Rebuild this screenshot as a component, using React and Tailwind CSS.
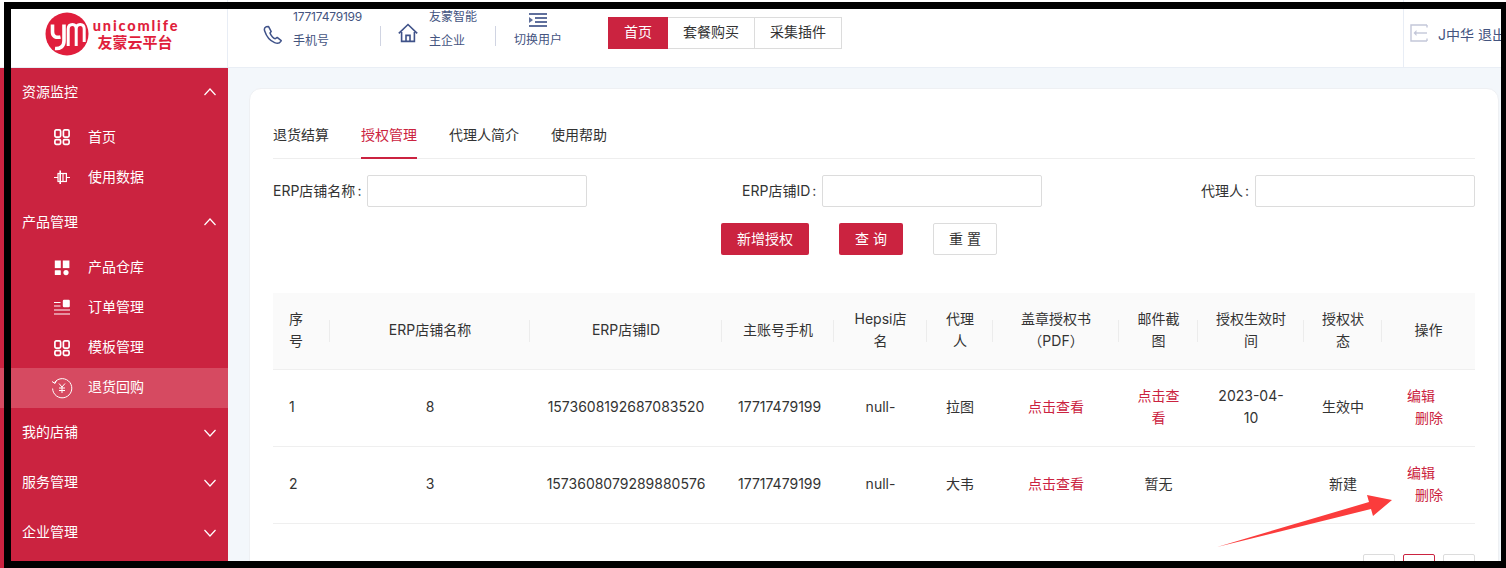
import React from "react";

function Chevron({ up }) {
  return (
    <svg width="14" height="14" viewBox="0 0 14 14" fill="none" stroke="#fff" strokeWidth="1.2">
      <path d={up ? "M1.5 10 L7 4 L12.5 10" : "M1.5 4 L7 10 L12.5 4"} />
    </svg>
  );
}

function GridIcon() {
  return (
    <svg width="18" height="18" viewBox="0 0 18 18" fill="none" stroke="#fff" strokeWidth="1.7">
      <rect x="1.9" y="1.9" width="5.7" height="7.2" rx="1.3" />
      <rect x="10.4" y="1.9" width="5.7" height="7.2" rx="1.3" />
      <rect x="1.9" y="11.7" width="5.7" height="4.6" rx="1.3" />
      <rect x="10.4" y="11.7" width="5.7" height="4.6" rx="1.3" />
    </svg>
  );
}

function DataIcon() {
  return (
    <svg width="18" height="18" viewBox="0 0 18 18" fill="none" stroke="#fff" strokeWidth="1.2">
      <path d="M1 9.5H5M13.5 9.5H17" />
      <path d="M7.2 2.5V16" strokeWidth="1.6" />
      <rect x="5" y="5.5" width="8.4" height="8" />
      <path d="M10 5.5V13.5" />
    </svg>
  );
}

function WarehouseIcon() {
  return (
    <svg width="18" height="18" viewBox="0 0 18 18" fill="#fff">
      <rect x="1.8" y="1.5" width="6" height="7.6" />
      <rect x="9.8" y="1.5" width="6.6" height="7.6" />
      <rect x="1.8" y="11.2" width="6" height="4.8" rx="0.6" />
      <circle cx="13" cy="13.6" r="2.6" />
    </svg>
  );
}

function OrderIcon() {
  return (
    <svg width="18" height="18" viewBox="0 0 18 18" fill="none" stroke="#fff" strokeWidth="1">
      <path d="M1 3.5H7.5M1 7H7.5M1 11H17M1 15H17" />
      <rect x="9.8" y="0.8" width="7" height="7.4" rx="1.2" fill="#fff" stroke="none" />
    </svg>
  );
}

function RefundIcon() {
  return (
    <svg width="22" height="22" viewBox="0 0 22 22" fill="none" stroke="#fff" strokeWidth="1">
      <path d="M3.5 5.5 A9.6 9.6 0 1 1 1.6 11.5" />
      <path d="M1 4.5 L4 6.5 L5.5 3.5" />
      <path d="M8 6.5 L11 10 L14 6.5M11 10V16M8 11H14M8 13.5H14" />
    </svg>
  );
}

function PhoneIcon() {
  return (
    <svg width="20" height="20" viewBox="0 0 20 20" fill="none" stroke="#3f5289" strokeWidth="1.5" strokeLinejoin="round">
      <path d="M3 1.8 C1.4 2.6 1 4 1.7 6 C3 10 6.6 15.6 11.6 17.6 C14 18.6 16.4 18.6 17.8 16.4 L18.2 15.6 L14.2 12.4 L12.4 13.6 C11 14 7.8 10.6 7 8 L8.2 6.6 L5.6 1.6 Z" />
    </svg>
  );
}

function HomeIcon() {
  return (
    <svg width="20" height="20" viewBox="0 0 20 20" fill="none" stroke="#3f5289" strokeWidth="1.6">
      <path d="M0.8 10.4 L10 1.5 L19.2 10.4" />
      <path d="M3.6 9 V18.4 H16.4 V9" />
      <path d="M8 18.4 V12.4 H12 V18.4" />
    </svg>
  );
}

function IndentIcon() {
  return (
    <svg width="18" height="16" viewBox="0 0 18 16" fill="#5f6f9c">
      <rect x="0" y="1" width="18" height="2" />
      <rect x="6" y="5" width="12" height="2" />
      <rect x="6" y="9" width="12" height="2" />
      <rect x="0" y="13" width="18" height="2" />
      <path d="M0 5 L4 8 L0 11 Z" />
    </svg>
  );
}

function LogoutIcon() {
  return (
    <svg width="18" height="18" viewBox="0 0 18 18" fill="none" stroke="#c3c7d9" strokeWidth="1.4">
      <path d="M17 1H1V17H17" />
      <path d="M17 1V3.5M17 17V14.5" />
      <path d="M6.5 6 L3.5 9 L6.5 12 Z" fill="#c3c7d9" stroke="none" />
      <path d="M6 9H17" />
    </svg>
  );
}

function Logo() {
  return (
    <div className="flex items-center w-[228px] h-full pl-[45px] shrink-0 border-r border-[#e8edf5]">
      <svg width="44" height="44" viewBox="0 0 44 44" className="shrink-0">
        <circle cx="22" cy="22" r="21.5" fill="#e01e3c" />
        <path d="M7.5 12.5 V20 C7.5 24.5 11 26 15.5 25 M19 12.5 V29 C19 34.5 15 37 10 36.5" fill="none" stroke="#fff" strokeWidth="3.6" />
        <path d="M23.2 34 V17 C23.2 13.5 25 12.5 27.5 12.5 C30 12.5 31.2 14 31.2 17 V34 M31.2 17 C31.2 14 33 12.5 35.2 12.5 C37.8 12.5 39.2 14 39.2 17 V30" fill="none" stroke="#fff" strokeWidth="3" />
      </svg>
      <div className="ml-[3px] w-[86px] flex flex-col items-center text-[#e01e3c] font-bold">
        <span className="ml-[2px] text-[14.5px] h-[16px] leading-[16px] tracking-[1.85px] whitespace-nowrap font-['Lato',sans-serif] font-black">unicomlife</span>
        <span className="text-[15px] h-[16px] leading-[16px] font-['Noto_Sans_CJK_SC',sans-serif]">友蒙云平台</span>
      </div>
    </div>
  );
}

function Header() {
  return (
    <header className="h-[68px] flex items-stretch bg-white border-b border-[#e9eef5] text-[12px] text-[#44547f]">
      <Logo />
      <div className="flex items-center pl-[35px] flex-1">
        <div className="mt-[2px]"><PhoneIcon /></div>
        <div className="ml-[10px] w-[87px] flex flex-col gap-[8px] mt-[-10px] leading-[16px]">
          <span className="tracking-[-0.2px]">17717479199</span>
          <span>手机号</span>
        </div>
        <div className="h-[20px] w-px bg-[#d0d4e2] mt-[4px]" />
        <div className="ml-[17px] mt-[-1px]"><HomeIcon /></div>
        <div className="ml-[11px] w-[66px] flex flex-col gap-[8px] mt-[-10px] leading-[16px]">
          <span>友蒙智能</span>
          <span>主企业</span>
        </div>
        <div className="h-[20px] w-px bg-[#d0d4e2] mt-[4px]" />
        <div className="ml-[18px] w-[48px] flex flex-col items-center gap-[4px] mt-[-8px] leading-[16px]">
          <IndentIcon />
          <span>切换用户</span>
        </div>
        <div className="ml-[46px] mt-[-2px] flex h-[32px] text-[14px] text-[#333]">
          <div className="w-[60px] flex items-center justify-center pb-[2px] bg-[#cb2340] text-white">首页</div>
          <div className="w-[87px] flex items-center justify-center pb-[2px] border border-l-0 border-[#dcdcdc]">套餐购买</div>
          <div className="w-[87px] flex items-center justify-center pb-[2px] border border-l-0 border-[#dcdcdc]">采集插件</div>
        </div>
      </div>
      <div className="w-[103px] shrink-0 flex items-center border-l border-[#e8edf5] pl-[6px] gap-[10px]">
        <div className="mt-[-1px]"><LogoutIcon /></div>
        <span className="mt-[2px] text-[14px] whitespace-nowrap text-[#44547f]">J中华 退出</span>
      </div>
    </header>
  );
}

function GroupHead({ label, up, h }) {
  return (
    <div className={`${h} flex items-center justify-between pl-[22px] pr-[11px] pb-[1px] text-[14px] text-white`}>
      <span className="mt-[-2px]">{label}</span>
      <Chevron up={up} />
    </div>
  );
}

function NavItem({ icon, label, active, lift }) {
  return (
    <div className={`h-[40px] flex items-center text-[14px] text-white ${active ? "bg-[#d64a61]" : ""}`}>
      <div className="w-[88px] pl-[50px] flex items-center">
        <div className="w-[24px] flex justify-center">{icon}</div>
      </div>
      <span className={lift ? "mt-[-4px]" : "mt-[-2px]"}>{label}</span>
    </div>
  );
}

function Sidebar() {
  return (
    <aside className="w-[228px] shrink-0 bg-[#cb2340]">
      <GroupHead label="资源监控" up h="h-[49px]" />
      <NavItem icon={<GridIcon />} label="首页" />
      <NavItem icon={<DataIcon />} label="使用数据" />
      <GroupHead label="产品管理" up h="h-[51px]" />
      <NavItem icon={<WarehouseIcon />} label="产品仓库" lift />
      <NavItem icon={<OrderIcon />} label="订单管理" lift />
      <NavItem icon={<GridIcon />} label="模板管理" lift />
      <NavItem icon={<RefundIcon />} label="退货回购" active lift />
      <GroupHead label="我的店铺" h="h-[50px]" />
      <GroupHead label="服务管理" h="h-[50px]" />
      <GroupHead label="企业管理" h="h-[50px]" />
    </aside>
  );
}

function Field({ label, className }) {
  return (
    <div className={`flex items-center ${className || ""}`}>
      <span className="mt-[-2px] text-[14px] text-[#333] whitespace-nowrap mr-[6px]">{label}<span className="ml-[2px]">:</span></span>
      <div className="w-[220px] h-[32px] border border-[#dcdcdc] rounded-[2px] bg-white" />
    </div>
  );
}

const colWidths = ["w-[57px]", "w-[200px]", "w-[192px]", "w-[112px]", "w-[93px]", "w-[66px]", "w-[126px]", "w-[79px]", "w-[106px]", "w-[78px]", "w-[93px]"];

const heads = ["序号", "ERP店铺名称", "ERP店铺ID", "主账号手机", "Hepsi店名", "代理人", "盖章授权书（PDF）", "邮件截图", "授权生效时间", "授权状态", "操作"];

function Th({ children, idx }) {
  const last = idx === heads.length - 1;
  return (
    <th className={`relative font-normal px-[16px] pb-[2px] ${idx === 0 ? "text-left" : "text-center"}`}>
      {children}
      {!last && <span className="absolute right-0 top-1/2 -translate-y-1/2 h-[22px] w-px bg-[#ececec]" />}
    </th>
  );
}

function Link({ children }) {
  return <span className="text-[#cb2340]">{children}</span>;
}

function Ops() {
  return (
    <div className="flex flex-col items-start pl-[9px] text-[#cb2340]">
      <span>编辑</span>
      <span className="ml-[8px]">删除</span>
    </div>
  );
}

function Row({ cells }) {
  return (
    <tr className="h-[77px] border-b border-[#efefef]">
      {cells.map((c, i) => (
        <td key={i} className={`px-[16px] pb-[2px] ${i === 0 ? "text-left" : "text-center"}`}>{c}</td>
      ))}
    </tr>
  );
}

function Table() {
  return (
    <table className="mt-[38px] w-[1202px] table-fixed border-collapse text-[14px] leading-[22px] text-[#333]">
      <colgroup>
        {colWidths.map((w, i) => <col key={i} className={w} />)}
      </colgroup>
      <thead>
        <tr className="h-[76px] bg-[#fafafa] border-b border-[#efefef]">
          {heads.map((h, i) => <Th key={h} idx={i}>{h}</Th>)}
        </tr>
      </thead>
      <tbody>
        <Row cells={["1", "8", "1573608192687083520", "17717479199", "null-", "拉图", <Link>点击查看</Link>, <Link>点击查看</Link>, "2023-04-10", "生效中", <Ops />]} />
        <Row cells={["2", "3", "1573608079289880576", "17717479199", "null-", "大韦", <Link>点击查看</Link>, "暂无", "", "新建", <Ops />]} />
      </tbody>
    </table>
  );
}

export default function App() {
  return (
    <div className="relative w-[1506px] h-[568px] overflow-hidden bg-white font-['Inter','Noto_Sans_CJK_SC',sans-serif]">
      <Header />
      <div className="flex h-[500px]">
        <Sidebar />
        <main className="flex-1 bg-[#f3f7fb] pl-[21px] pr-[7px] pt-[20px]">
          <div className="bg-white rounded-[12px] border border-[#eef0f3] h-[600px] pl-[23px] pr-[23px]">
            <div className="flex gap-[32px] h-[70px] pt-[33px] border-b border-[#eeeeee] text-[14px] leading-[26px] text-[#333]">
              <span>退货结算</span>
              <span className="h-[37px] border-b-2 border-[#cb2340] text-[#cb2340]">授权管理</span>
              <span>代理人简介</span>
              <span>使用帮助</span>
            </div>
            <div className="flex justify-between mt-[16px]">
              <Field label="ERP店铺名称" />
              <Field label="ERP店铺ID" className="mr-[4px]" />
              <Field label="代理人" />
            </div>
            <div className="flex justify-center gap-[30px] pr-[30px] mt-[16px] text-[14px]">
              <div className="w-[88px] h-[32px] bg-[#cb2340] rounded-[2px] text-white flex items-center justify-center pb-[2px]">新增授权</div>
              <div className="w-[64px] h-[32px] bg-[#cb2340] rounded-[2px] text-white flex items-center justify-center pb-[2px] pl-[4px] tracking-[4px]">查询</div>
              <div className="w-[64px] h-[32px] border border-[#dcdcdc] rounded-[2px] text-[#333] flex items-center justify-center pb-[2px] pl-[4px] tracking-[4px]">重置</div>
            </div>
            <Table />
            <div className="flex justify-end gap-[8px] mt-[30px]">
              <div className="w-[32px] h-[32px] border border-[#dcdcdc] rounded-[2px]" />
              <div className="w-[32px] h-[32px] border border-[#cb2340] rounded-[2px]" />
              <div className="w-[32px] h-[32px] border border-[#dcdcdc] rounded-[2px]" />
            </div>
          </div>
        </main>
      </div>
      <div className="absolute left-[4px] top-[2px] right-0 bottom-0 border-l-[7px] border-t-[7px] border-r-[5px] border-b-[7px] border-black pointer-events-none" />
      <svg className="absolute left-[1210px] top-[490px]" width="190" height="62" viewBox="1210 490 190 62">
        <path d="M1217 547 L1369 502 L1367 495 L1392 500 L1373 516 L1371 509 Z" fill="#fb3c3c" />
      </svg>
    </div>
  );
}
